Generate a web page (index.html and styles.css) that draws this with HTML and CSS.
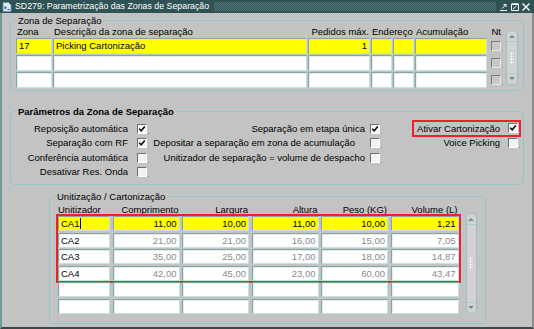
FILE: index.html
```html
<!DOCTYPE html>
<html lang="pt">
<head>
    <meta charset="UTF-8">
    <title>SD279: Parametrização das Zonas de Separação</title>
    <link rel="stylesheet" href="styles.css">
</head>
<body>
    <div class="window">
        <div class="titlebar">
            <svg class="app-icon" width="10" height="10" viewBox="0 0 10 10">
                <path d="M1 0.5 H6.5 L9 3 V9.5 H1 Z" fill="#dce9f7" stroke="#6d8fb8" stroke-width="0.8"/>
                <path d="M2.5 4 L5 5.8 L2.5 7.6 Z" fill="#1e4f9c"/>
                <path d="M5.5 7.5 H7.5" stroke="#1e4f9c" stroke-width="1"/>
            </svg>
            <span class="title">SD279: Parametrização das Zonas de Separação</span>
            <div class="title-dots"></div>
            <div class="win-buttons">
                <svg width="8" height="8" viewBox="0 0 8 8"><path d="M0 7.5 H7" stroke="#fff" stroke-width="1"/><path d="M2 5.5 L6 1.5 M6 1.5 H3.5 M6 1.5 V4" stroke="#fff" stroke-width="1" fill="none"/></svg>
                <svg width="8" height="8" viewBox="0 0 8 8"><path d="M0.5 1.5 H7.5 V7.5 H0.5 Z" stroke="#fff" stroke-width="1" fill="none"/><path d="M0.5 1 H7.5" stroke="#fff" stroke-width="1.5"/><path d="M2 6 L5.5 3" stroke="#fff" stroke-width="1"/></svg>
                <svg width="8" height="8" viewBox="0 0 8 8"><path d="M0.5 0.5 L7.5 7.5 M7.5 0.5 L0.5 7.5" stroke="#fff" stroke-width="1.4"/></svg>
            </div>
        </div>

        <div class="content">
            <fieldset class="frame frame-zona">
                <legend>Zona de Separação</legend>
                <div class="zona-body">
                    <div class="zona-rows">
                        <div class="zrow zhead">
                            <span>Zona</span>
                            <span>Descrição da zona de separação</span>
                            <span class="num">Pedidos máx.</span>
                            <span class="span2">Endereço</span>
                            <span>Acumulação</span>
                            <span class="nt">Nt</span>
                        </div>
                        <div class="zrow">
                            <div class="cell cur">17</div>
                            <div class="cell cur">Picking Cartonização</div>
                            <div class="cell cur num">1</div>
                            <div class="cell cur"></div>
                            <div class="cell cur"></div>
                            <div class="cell cur"></div>
                            <div class="cb cb-off"></div>
                        </div>
                        <div class="zrow">
                            <div class="cell"></div>
                            <div class="cell"></div>
                            <div class="cell"></div>
                            <div class="cell"></div>
                            <div class="cell"></div>
                            <div class="cell"></div>
                            <div class="cb cb-off"></div>
                        </div>
                        <div class="zrow">
                            <div class="cell"></div>
                            <div class="cell"></div>
                            <div class="cell"></div>
                            <div class="cell"></div>
                            <div class="cell"></div>
                            <div class="cell"></div>
                            <div class="cb cb-off"></div>
                        </div>
                    </div>
                    <div class="scrollbar sb-zona">
                        <div class="sb-btn up"></div>
                        <div class="sb-track"><span class="grip"></span></div>
                        <div class="sb-btn down"></div>
                    </div>
                </div>
            </fieldset>

            <fieldset class="frame frame-params">
                <legend>Parâmetros da Zona de Separação</legend>
                <div class="params">
                    <span class="plabel">Reposição automática</span>
                    <span class="cb-cell"><span class="cb on"></span></span>
                    <span class="plabel">Separação em etapa única</span>
                    <span class="cb-cell"><span class="cb on"></span></span>
                    <span class="pright"><span class="marked">Ativar Cartonização <span class="cb on"></span></span></span>

                    <span class="plabel">Separação com RF</span>
                    <span class="cb-cell"><span class="cb on"></span></span>
                    <span class="plabel shift">Depositar a separação em zona de acumulação</span>
                    <span class="cb-cell"><span class="cb"></span></span>
                    <span class="pright">Voice Picking <span class="cb"></span></span>

                    <span class="plabel">Conferência automática</span>
                    <span class="cb-cell"><span class="cb"></span></span>
                    <span class="plabel">Unitizador de separação = volume de despacho</span>
                    <span class="cb-cell"><span class="cb"></span></span>

                    <span class="plabel first">Desativar Res. Onda</span>
                    <span class="cb-cell"><span class="cb"></span></span>
                </div>
            </fieldset>

            <fieldset class="frame frame-unit">
                <legend>Unitização / Cartonização</legend>
                <div class="unit-body">
                    <div class="unit-rows">
                        <div class="urow uhead">
                            <span>Unitizador</span>
                            <span class="num">Comprimento</span>
                            <span class="num">Largura</span>
                            <span class="num">Altura</span>
                            <span class="num">Peso (KG)</span>
                            <span class="num">Volume (L)</span>
                        </div>
                        <div class="marked-rows">
                            <div class="urow">
                                <div class="cell cur">CA1<span class="caret"></span></div>
                                <div class="cell cur num">11,00</div>
                                <div class="cell cur num">10,00</div>
                                <div class="cell cur num">11,00</div>
                                <div class="cell cur num">10,00</div>
                                <div class="cell cur num">1,21</div>
                            </div>
                            <div class="urow">
                                <div class="cell">CA2</div>
                                <div class="cell num dim">21,00</div>
                                <div class="cell num dim">21,00</div>
                                <div class="cell num dim">16,00</div>
                                <div class="cell num dim">15,00</div>
                                <div class="cell num dim">7,05</div>
                            </div>
                            <div class="urow">
                                <div class="cell">CA3</div>
                                <div class="cell num dim">35,00</div>
                                <div class="cell num dim">25,00</div>
                                <div class="cell num dim">17,00</div>
                                <div class="cell num dim">18,00</div>
                                <div class="cell num dim">14,87</div>
                            </div>
                            <div class="urow">
                                <div class="cell">CA4</div>
                                <div class="cell num dim">42,00</div>
                                <div class="cell num dim">45,00</div>
                                <div class="cell num dim">23,00</div>
                                <div class="cell num dim">60,00</div>
                                <div class="cell num dim">43,47</div>
                            </div>
                        </div>
                        <div class="urow">
                            <div class="cell"></div>
                            <div class="cell"></div>
                            <div class="cell"></div>
                            <div class="cell"></div>
                            <div class="cell"></div>
                            <div class="cell"></div>
                        </div>
                        <div class="urow">
                            <div class="cell"></div>
                            <div class="cell"></div>
                            <div class="cell"></div>
                            <div class="cell"></div>
                            <div class="cell"></div>
                            <div class="cell"></div>
                        </div>
                    </div>
                    <div class="scrollbar sb-unit">
                        <div class="sb-btn up"></div>
                        <div class="sb-track"><span class="grip"></span></div>
                        <div class="sb-btn down"></div>
                    </div>
                </div>
            </fieldset>
        </div>
    </div>
</body>
</html>
```

FILE: styles.css
```css
body {
    margin: 0;
    font-family: "Liberation Sans", Arial, sans-serif;
    font-size: 9.5px;
    color: #000;
    background-color: #c3c3c3;
}
.window {
    width: 534px;
    height: 329px;
    display: flex;
    flex-direction: column;
    background-color: #c3c3c3;
}
.titlebar {
    height: 13px;
    flex: none;
    display: flex;
    align-items: center;
    background-color: #2f5254;
    color: #fff;
}
.app-icon {
    margin: 0 3px 0 2px;
}
.title {
    font-size: 8.8px;
    line-height: 13px;
    white-space: nowrap;
}
.title-dots {
    flex: 1;
    height: 9px;
    margin: 0 4px 0 5px;
    background: repeating-conic-gradient(#55797a 0 25%, #2f5254 0 50%) 0 0 / 2px 2px;
}
.win-buttons {
    display: flex;
    gap: 3px;
    margin-right: 4px;
}
.content {
    flex: 1;
    box-sizing: border-box;
    border-left: 2px solid #6f9a9a;
    border-right: 2px solid #8c8c8c;
    border-bottom: 2px solid #3e4646;
    padding: 1.5px 8px 0 8px;
}

/* frames */
.frame {
    margin: 0;
    min-width: 0;
    border: 1px solid #93c6c6;
    border-radius: 5px;
    padding: 0 5px 2px 5px;
}
.frame legend {
    padding: 0 2px;
    line-height: 11px;
}
.frame-params {
    margin-top: 14.5px;
    padding-bottom: 5px;
}
.frame-params legend {
    font-weight: bold;
    font-size: 9.5px;
}
.frame-unit {
    margin: 5.5px 38px 0 39px;
    padding: 0 7px 9px 8px;
}
.frame-unit legend {
    margin-left: -3px;
}

/* fields */
.cell {
    height: 16px;
    box-sizing: border-box;
    background-color: #fff;
    border: 1px solid;
    border-color: #86a6a6 #c4e2e2 #c4e2e2 #86a6a6;
    box-shadow: inset 1px 1px 0 #e2eeee;
    padding: 0 2px;
    line-height: 14px;
    white-space: nowrap;
    overflow: hidden;
}
.cell.cur {
    background-color: #ffff00;
    box-shadow: none;
}
.num {
    text-align: right;
}
.dim {
    color: #8a8a8a;
}
.caret {
    display: inline-block;
    width: 1px;
    height: 11px;
    margin-left: 1px;
    vertical-align: -2px;
    background-color: #000;
}
.cb {
    position: relative;
    display: inline-block;
    width: 10px;
    height: 10px;
    box-sizing: border-box;
    background-color: #f2f2f2;
    border: 1px solid;
    border-color: #707070 #ffffff #ffffff #707070;
    vertical-align: middle;
}
.cb::after {
    content: "";
    position: absolute;
    right: -3px;
    bottom: -1px;
    width: 1px;
    height: 1px;
    background-color: #8a8a8a;
}
.cb.on {
    background: #f2f2f2 url("data:image/svg+xml,%3Csvg xmlns='http://www.w3.org/2000/svg' width='8' height='8' viewBox='0 0 8 8'%3E%3Cpath d='M1.2 3.8 L3.2 5.8 L6.8 1.6' stroke='%23101010' stroke-width='1.6' fill='none'/%3E%3C/svg%3E") center / 8px 8px no-repeat;
}
.cb-off {
    background-color: #c8c8c8;
    border-color: #7c7c7c #e8e8e8 #e8e8e8 #7c7c7c;
}

/* zona de separacao */
.zona-body {
    display: flex;
    align-items: flex-end;
}
.zona-rows {
    display: flex;
    flex-direction: column;
    gap: 1px;
}
.zrow {
    display: grid;
    grid-template-columns: 36px 254px 62px 21px 21px 72px 13px;
    column-gap: 1px;
    align-items: center;
}
.zrow .cb {
    justify-self: end;
}
.zhead {
    height: 11.5px;
    line-height: 11px;
    align-items: end;
}
.zhead span {
    padding-left: 1px;
    white-space: nowrap;
}
.zhead .num {
    padding-right: 1px;
}
.zhead .span2 {
    grid-column: span 2;
}
.zhead .nt {
    text-align: right;
}

/* scrollbar */
.scrollbar {
    display: flex;
    flex-direction: column;
    box-sizing: border-box;
    border: 1px solid #97c4c4;
    border-radius: 5px;
    background-color: #d2d2d2;
}
.sb-zona {
    width: 12px;
    height: 55px;
    margin: 0 0 3px 5px;
}
.sb-unit {
    width: 11px;
    height: 101px;
    margin: 0 0 0 7px;
}
.sb-btn {
    height: 10px;
    position: relative;
}
.sb-btn::after {
    content: "";
    position: absolute;
    left: 50%;
    top: 4px;
    margin-left: -3px;
    border-left: 3px solid transparent;
    border-right: 3px solid transparent;
}
.sb-btn.up::after {
    border-bottom: 3px solid #6f8f8f;
}
.sb-btn.down::after {
    border-top: 3px solid #6f8f8f;
    top: 3px;
}
.sb-track {
    flex: 1;
    display: flex;
    align-items: center;
    justify-content: center;
    border-top: 1px solid #a9cccc;
    border-bottom: 1px solid #a9cccc;
}
.grip {
    width: 4px;
    height: 12px;
    background: radial-gradient(circle, #ffffff 0.9px, transparent 1.1px) 0 0 / 3px 3px;
}

/* parametros */
.params {
    display: grid;
    grid-template-columns: 112px 19px 218px 15px 120px 18px;
    grid-auto-rows: 14.5px;
    align-items: center;
    padding-top: 4.5px;
    white-space: nowrap;
}
.plabel {
    text-align: right;
}
.plabel.first {
    grid-column: 1;
}
.plabel.shift {
    padding-right: 10px;
}
.cb-cell {
    text-align: right;
}
.pright {
    grid-column: span 2;
    display: flex;
    justify-content: flex-end;
    align-items: center;
    gap: 8px;
}
.marked {
    display: flex;
    align-items: center;
    gap: 8px;
    padding-left: 2px;
    outline: 2px solid #e8242a;
    outline-offset: 1px;
}

/* unitizacao */
.unit-body {
    display: flex;
    align-items: flex-end;
}
.unit-rows {
    display: flex;
    flex-direction: column;
    gap: 1.5px;
}
.marked-rows {
    display: flex;
    flex-direction: column;
    gap: 1.5px;
    outline: 2px solid #e8242a;
}
.urow {
    display: grid;
    grid-template-columns: 52px 67px 67px 67px 67px 68px;
    column-gap: 2.5px;
}
.urow .cell {
    height: 15px;
    line-height: 13px;
}
.uhead {
    padding-top: 2px;
    line-height: 11px;
    white-space: nowrap;
}
.uhead span {
    padding-right: 1px;
}
```
